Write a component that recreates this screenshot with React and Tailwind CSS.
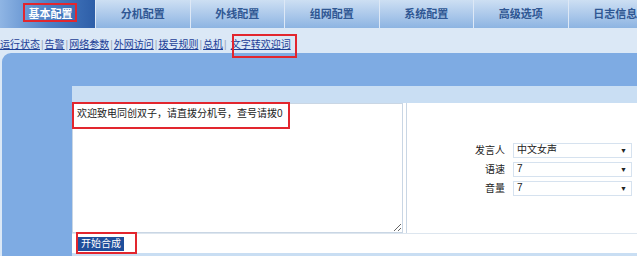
import React from "react";

const tabs = ["基本配置", "分机配置", "外线配置", "组网配置", "系统配置", "高级选项", "日志信息"];
const links = ["运行状态", "告警", "网络参数", "外网访问", "拨号规则", "总机", "文字转欢迎词"];

const FakeSelect = ({ value }) => (
  <div className="w-[119px] h-[15px] border border-[#d6e2ef] bg-white flex items-center justify-between pl-[3px] pr-[4px]">
    <span className="text-[10px] leading-none text-[#222]">{value}</span>
    <span className="text-[7px] leading-none text-[#222]">▼</span>
  </div>
);

const App = () => {
  return (
    <div
      className="relative w-[637px] h-[256px] overflow-hidden bg-[#dbe8f6] flex flex-col"
      style={{ fontFamily: "'Liberation Sans', 'Noto Sans CJK SC', sans-serif" }}
    >
      {/* top tabs */}
      <div className="h-[28px] flex shrink-0">
        {tabs.map((t, i) => (
          <div
            key={t}
            className={
              i === 0
                ? "w-[95px] shrink-0 flex items-center justify-center pl-[6px] bg-gradient-to-r from-[#8fb5e4] via-[#4f82c6] to-[#2d5ea8] text-white font-bold text-[11px]"
                : "w-[94.5px] shrink-0 flex items-center justify-center border-l border-[#dde8f6] bg-gradient-to-b from-[#cddff3] to-[#8db4e2] text-[#2f5793] font-bold text-[11px]"
            }
          >
            {t}
          </div>
        ))}
      </div>

      {/* sub nav */}
      <div className="h-[25px] shrink-0 flex items-end pb-[3px] text-[10px] leading-none">
        {links.map((l, i) => (
          <React.Fragment key={l}>
            {i > 0 && <span className="text-[#9aa7b8] px-[1px]">|</span>}
            <span className={"text-[#1d3f96] underline " + (i === links.length - 1 ? "ml-[3px]" : "")}>{l}</span>
          </React.Fragment>
        ))}
      </div>

      {/* content */}
      <div className="flex-1 ml-[2px] rounded-tl-[9px] bg-[#7eabe3] pt-[33px] flex flex-col">
        <div className="ml-[70px] flex-1 flex flex-col">
          <div className="h-[17px] bg-[#c9def3] shrink-0" />
          <div className="flex h-[130px] shrink-0 bg-white">
            <textarea
              className="w-[331px] h-[130px] border border-[#c9d6e4] px-[4px] py-[3px] text-[10px] leading-[14px] text-[#222] outline-none"
              defaultValue="欢迎致电同创双子，请直拨分机号，查号请拨0"
            />
            <div className="flex-1 ml-[3px] border-l border-[#c9d6e4] flex flex-col justify-center pt-[2px] pl-[67px] gap-[4px]">
              {[
                ["发言人", "中文女声"],
                ["语速", "7"],
                ["音量", "7"],
              ].map(([k, v]) => (
                <div key={k} className="flex items-center">
                  <span className="w-[31px] text-right text-[10px] text-[#222] mr-[8px]">{k}</span>
                  <FakeSelect value={v} />
                </div>
              ))}
            </div>
          </div>
          <div className="h-[20px] bg-white border-t border-[#dde6ef] flex items-center pl-[6px]">
            <div className="h-[14px] px-[3px] bg-[#1f4e9b] text-white text-[10px] leading-[14px]">开始合成</div>
          </div>
          <div className="flex-1 bg-[#c9def3]" />
        </div>
      </div>

      {/* annotation boxes */}
      <div className="absolute left-[23px] top-[3px] w-[54px] h-[19px] border-2 border-[#e2262e]" />
      <div className="absolute left-[232px] top-[34px] w-[65px] h-[24px] border-2 border-[#e2262e]" />
      <div className="absolute left-[72px] top-[102px] w-[218px] h-[27px] border-2 border-[#e2262e]" />
      <div className="absolute left-[76px] top-[232px] w-[61px] h-[22px] border-2 border-[#e2262e]" />
    </div>
  );
};

export default App;
